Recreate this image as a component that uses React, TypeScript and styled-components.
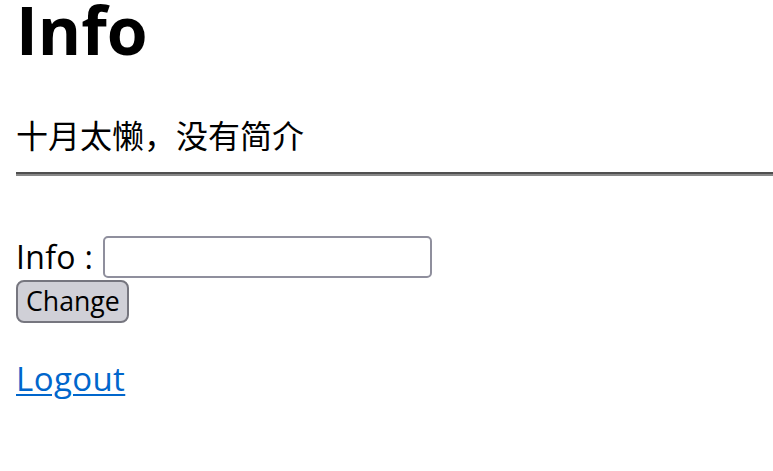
import React, { useState, ChangeEvent } from 'react';
import styled, { createGlobalStyle } from 'styled-components';

const GlobalStyle = createGlobalStyle`
  html, body {
    margin: 0;
    padding: 0;
    background: #fff;
  }

  body {
    padding-left: 16px;
    font-family: 'Open Sans', 'Noto Sans CJK SC', sans-serif;
    color: #000;
  }
`;

export default function App() {
  const [info, setInfo] = useState('');

  const handleInfoChange = (e: ChangeEvent<HTMLInputElement>) => {
    setInfo(e.target.value);
  };

  return (
    <Page>
      <GlobalStyle />
      <Title>Info</Title>
      <Bio>十月太懒，没有简介</Bio>
      <Rule />

      <Form onSubmit={(e) => e.preventDefault()}>
        <FieldRow>
          <Label htmlFor="info">Info :</Label>
          <Input id="info" type="text" value={info} onChange={handleInfoChange} />
        </FieldRow>
        <Button type="submit">Change</Button>
      </Form>

      <LinkLine>
        <LogoutLink href="#logout">Logout</LogoutLink>
      </LinkLine>
    </Page>
  );
}

const Page = styled.div`
  display: flex;
  flex-direction: column;
  align-items: flex-start;
  overflow: hidden;
`;

const Title = styled.h1`
  margin: 0;
  font-size: 66px;
  line-height: 58px;
  font-weight: 700;
`;

const Bio = styled.p`
  margin: 60px 0 0;
  font-family: 'Noto Sans CJK SC', sans-serif;
  font-size: 32px;
  line-height: 32px;
`;

const Rule = styled.hr`
  align-self: stretch;
  margin: 22px 0 0;
  height: 0;
  border: none;
  border-top: 2px solid #4f4f4f;
  border-bottom: 2px solid #888888;
`;

const Form = styled.form`
  margin: 60px 0 0;
  display: flex;
  flex-direction: column;
  align-items: flex-start;
  gap: 2px;
`;

const FieldRow = styled.div`
  display: flex;
  align-items: center;
  gap: 10px;
`;

const Label = styled.label`
  font-size: 32px;
  line-height: 32px;
  letter-spacing: 0.3px;
`;

const Input = styled.input`
  box-sizing: border-box;
  width: 329px;
  height: 42px;
  padding: 2px 6px;
  border: 2px solid #8f8f9d;
  border-radius: 5px;
  background: #fff;
  font-family: inherit;
  font-size: 26px;

  &:focus {
    outline: none;
  }
`;

const Button = styled.button`
  box-sizing: border-box;
  width: 113px;
  height: 43px;
  padding: 0 8px;
  border: 2px solid #76767f;
  border-radius: 8px;
  background: #d0d0d7;
  color: #000;
  font-family: inherit;
  font-size: 26.67px;
  line-height: 1;
  cursor: pointer;
`;

const LinkLine = styled.div`
  margin: 36px 0 0;
  padding-bottom: 8px;
  font-size: 33px;
  line-height: 40px;
`;

const LogoutLink = styled.a`
  color: #0066cc;
  text-decoration-line: underline;
  text-decoration-color: #0066cc;
  text-decoration-thickness: 2px;
  text-underline-offset: 3px;
  letter-spacing: 0.4px;
`;
